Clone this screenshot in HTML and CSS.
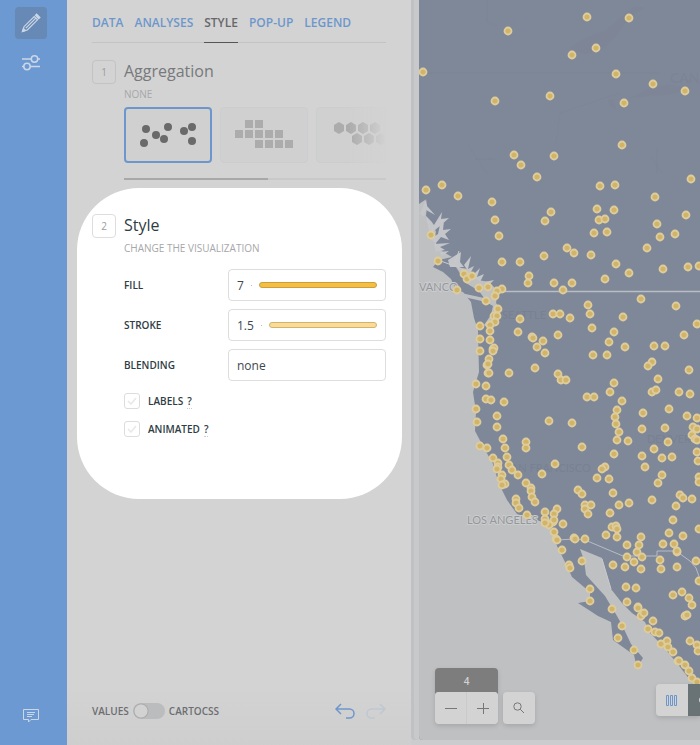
FILE: index.html
```html
<!DOCTYPE html>
<html lang="en">
<head>
<meta charset="utf-8">
<meta name="viewport" content="width=device-width, initial-scale=1">
<title>Map editor</title>
<link rel="stylesheet" href="styles.css">
</head>
<body>
<div class="app">
  <aside class="rail">
    <button class="rail-btn rail-btn-active" type="button" aria-label="Edit">
      <svg width="20" height="20" viewBox="0 0 20 20" fill="none" stroke="currentColor" stroke-width="1.2"><path d="M1.600 18.400 3 13.700 13.200 3.500 16.500 6.800 6.300 17Z"/><path d="M4.800 15.200 14.800 5.200"/><path d="M1.400 18.600 2.400 15.500 4.500 17.600Z" fill="currentColor"/><path d="M14.400 2.300 15.600 1.100 18.900 4.400 17.700 5.600Z" fill="currentColor"/></svg>
    </button>
    <button class="rail-btn" type="button" aria-label="Settings">
      <svg width="20" height="18" viewBox="0 0 20 18" fill="none" stroke="currentColor" stroke-width="1.5"><path d="M1 5h9M17 5h2M1 12.500h2M9 12.500h10"/><circle cx="13.500" cy="5" r="3.200"/><circle cx="6" cy="12.500" r="3.200"/></svg>
    </button>
    <button class="rail-btn rail-last" type="button" aria-label="Comments">
      <svg width="16" height="14" viewBox="0 0 16 14" fill="none" stroke="currentColor" stroke-width="1"><path d="M.5.500h15v10H8L5.500 13v-2.500H.5zM4 3.500h8M4 5.500h7M4 7.500h5"/></svg>
    </button>
  </aside>

  <main class="panel">
    <nav class="tabs">
      <a class="tab" href="#data">DATA</a>
      <a class="tab" href="#analyses">ANALYSES</a>
      <a class="tab tab-active" href="#style">STYLE</a>
      <a class="tab" href="#popup">POP-UP</a>
      <a class="tab" href="#legend">LEGEND</a>
    </nav>

    <section class="block">
      <span class="step">1</span>
      <div class="block-body">
        <h2 class="title">Aggregation</h2>
        <p class="sub">NONE</p>
        <div class="carousel">
          <button class="card card-active" type="button" aria-label="Points">
            <svg width="58" height="26" viewBox="0 0 58 26" fill="#6a6a6a"><circle cx="7" cy="7" r="4"/><circle cx="5" cy="21" r="4"/><circle cx="17" cy="13" r="4"/><circle cx="29" cy="5" r="4"/><circle cx="25" cy="17" r="4"/><circle cx="45" cy="9" r="4"/><circle cx="53" cy="5" r="4"/><circle cx="53" cy="19" r="4"/></svg>
          </button>
          <button class="card" type="button" aria-label="Squares">
            <svg width="58" height="30" viewBox="0 0 58 30"><path fill="#acacac" d="M10 0h8v8h-8zM20 0h8v8h-8zM0 10h8v8H0zM10 10h8v8h-8zM20 10h8v8h-8zM30 10h8v8h-8zM40 10h8v8h-8zM20 20h8v8h-8zM30 20h8v8h-8zM40 20h8v8h-8zM50 20h8v8h-8z"/></svg>
          </button>
          <button class="card" type="button" aria-label="Hexagons">
            <svg width="52" height="26" viewBox="0 0 52 26"><defs><path id="hex" fill="#acacac" d="M5 0 10 3v6l-5 3-5-3V3z"/></defs><use href="#hex"/><use href="#hex" x="12"/><use href="#hex" x="24"/><use href="#hex" x="36"/><use href="#hex" x="18" y="11"/><use href="#hex" x="30" y="11"/><use href="#hex" x="42" y="11"/></svg>
          </button>
        </div>
        <div class="track"><div class="thumb"></div></div>
      </div>
    </section>

    <section class="block spotlight">
      <span class="step">2</span>
      <div class="block-body">
        <h2 class="title">Style</h2>
        <p class="sub">CHANGE THE VISUALIZATION</p>
        <div class="form">
          <div class="row">
            <label class="label" for="fill">FILL</label>
            <button class="field" id="fill" type="button"><span>7</span><span class="dot"></span><span class="bar"></span></button>
          </div>
          <div class="row">
            <label class="label" for="stroke">STROKE</label>
            <button class="field" id="stroke" type="button"><span>1.5</span><span class="dot"></span><span class="bar bar-light"></span></button>
          </div>
          <div class="row">
            <label class="label" for="blending">BLENDING</label>
            <select class="field" id="blending"><option>none</option></select>
          </div>
          <div class="check-row">
            <span class="check"><input type="checkbox" id="labels"><svg width="10" height="8" viewBox="0 0 10 8"><path d="M1 4l3 3 5-6"/></svg></span>
            <label class="label" for="labels">LABELS</label><span class="help">?</span>
          </div>
          <div class="check-row">
            <span class="check"><input type="checkbox" id="animated"><svg width="10" height="8" viewBox="0 0 10 8"><path d="M1 4l3 3 5-6"/></svg></span>
            <label class="label" for="animated">ANIMATED</label><span class="help">?</span>
          </div>
        </div>
      </div>
    </section>

    <footer class="foot">
      <label for="mode">VALUES</label>
      <input class="switch" type="checkbox" id="mode">
      <label for="mode">CARTOCSS</label>
      <div class="history">
        <button class="icon-btn undo" type="button" aria-label="Undo"><svg width="20" height="16" viewBox="0 0 20 16"><path d="M6 1 1 6l5 5M1 6h13.500a4.500 4.500 0 0 1 0 9H11"/></svg></button>
        <button class="icon-btn redo" type="button" aria-label="Redo"><svg width="20" height="16" viewBox="0 0 20 16"><path d="M14 1l5 5-5 5M19 6H5.500a4.500 4.500 0 0 0 0 9H9"/></svg></button>
      </div>
    </footer>
  </main>

  <section class="map">
    <svg class="map-art" viewBox="419 0 281 740" preserveAspectRatio="xMinYMin slice" role="img" aria-label="Map of western North America">
      <defs>
        <marker id="pin" markerWidth="10" markerHeight="10" refX="5" refY="5" markerUnits="userSpaceOnUse"><circle cx="5" cy="5" r="3.500" fill="#d0b467" stroke="#dfcc9c" stroke-width="1.800"/></marker>
      </defs>
      <rect x="419" width="2000" height="2000" fill="#7f8899"/>
      <g fill="#7b8191" stroke="#7b8191">
        <path d="M570 48l15-10 20-7 17-14 12-10 10 1-14 8-14 20-12 12-18 6zM630 98l20-10 20-3 20 4-20 5-18 1zM608 100l6 0 2 10-6-4z" opacity=".35"/>
        <path fill="none" opacity=".4" d="M468 145l20 30M475 159h20M556 143l4-30 60-20M650 155l12 18M657 148v25M487 0v22l10 4M420 73h240"/>
      </g>
      <path fill="#bec0c2" d="M419 204 425 200 427 206 426 216 432 222 436 232 434 240 440 250 452 257 439 260 433 267 443 272 451 279 456 290 463 292 471 302 474 318 478 330 479 372 473 392 476 412 475 431 484 448 493 464 499 484 507 500 517 514 532 519 547 523 552 532 557 546 565 562 572 577 590 592 590 601 578 603 598 616 611 622 613 640 634 655 636 664 640 663 643 658 631 644 622 625 617 616 605 596 586 575 584 560 580 549 602 558 611 589 622 603 632 613 645 622 650 633 660 643 667 651 680 667 690 680 704 690 740 740 1000 2000H419Z"/>
      <path fill="#bec0c2" d="M456 267 468 269 478 280 489 282 498 291 496 303 500 308 494 322 488 328 484 325 491 315 493 306 486 302 464 297 461 293 484 298 479 291 466 283Z"/>
      <g fill="#c4c6ca">
        <path d="M420 214 426 199 427 206 435 215 426 210 424 217ZM426 216 434 225 442 212 441 219 449 218 440 226 430 234ZM430 239 438 234 440 225 444 221 443 230 451 229 445 234 449 240 441 237 436 243ZM434 244 450 243 440 247 445 250 436 252ZM440 252 449 251 442 256ZM448 260 461 252 460 262 464 267 450 267ZM464 265 471 256 468 269 474 266 470 274ZM472 276 480 268 477 277 484 274 480 282ZM484 282 494 280 489 285Z"/>
      </g>
      <path fill="none" stroke="#c9cacd" stroke-width="1" d="M427 218l3 11M432 228l4 18M455 262l4-11M438 260l22 8 14 8M602 559l9 30"/>
      <path fill="none" stroke="#b9bdc4" stroke-width="1.500" d="M503 291.500H2000"/>
      <path fill="none" stroke="#b6bcc8" stroke-width="1" d="M557 540l18-1 10 1 38 16h34v-5h19l14 10 6 7 5 14 10 15"/>
      <g class="place-faint"><text x="670" y="83" class="country">CANADA</text><text x="502" y="319">SEATTLE</text><text x="505" y="472">SAN FRANCISCO</text><text x="647" y="443">DENVER</text></g>
      <g class="place"><text x="419" y="291">VANCO</text><text x="467" y="524">LOS ANGELES</text></g>
      <polyline fill="none" stroke="none" marker-start="url(#pin)" marker-mid="url(#pin)" marker-end="url(#pin)" points="587,17 629,18 508,31 596,48 572,55 423,72 616,74 653,84 685,91 495,101 550,96 624,103 622,145 514,155 521,165 554,156 537,177 426,190 442,185 458,196 600,186 615,185 691,179 655,197 492,202 551,212 545,221 495,220 499,236 502,262 520,262 544,256 567,248 574,253 431,235 438,261 529,276 528,283 554,283 572,283 563,290 464,274 467,279 472,276 479,288 488,287 502,289 497,291 495,296 486,301 457,290 498,309 494,316 497,316 495,322 490,325 490,331 480,326 520,319 518,332 553,314 560,314 570,318 558,335 532,337 533,338 543,341 537,347 545,353 480,339 490,340 480,351 493,349 494,348 489,359
        597,209 614,210 599,220 605,219 686,215 657,224 594,233 607,232 660,237 675,234 647,248 591,255 616,264 629,273 605,279 663,269 688,267 699,266 641,299 588,305 590,314 676,306 623,317 592,328 614,332 609,342 625,347 697,324 684,335 654,346 665,346 593,355 607,355 652,362 648,366 689,370 558,374 658,379
        493,351 487,365 488,364 488,373 489,373 509,373 535,368 561,380 566,380 476,384 486,386 486,399 491,400 504,402 476,409 497,416 497,427 477,422 549,421 572,423 587,397 594,397 614,383 610,392 622,401 617,410 615,417 616,424 619,432 617,440 628,441 614,454 652,392 656,390 679,392 690,394 669,409 643,413 642,429 665,428 687,416 697,418 693,427 697,429 692,435 695,439 697,440 697,452 698,461 668,442 654,449 642,456 662,458 672,457 645,467 662,475 658,483 699,477 699,482
        503,439 505,448 507,457 480,446 487,448 526,442 526,448 582,447 555,464 542,474 493,458 498,463 498,467 497,469 502,475 501,479 505,484 502,485 509,465 512,470 518,475 526,483 531,488 531,491 532,497 535,502 516,499 516,503 519,508 527,515 605,467 602,469 597,478 609,479 613,493 578,490 582,494 585,505 591,505 585,509 588,514 619,505 629,503 610,513 652,500 680,495 683,498 692,499 676,506 673,520 545,512 545,519 557,509 554,514 553,522 554,520 549,525 545,523 563,524 554,532 556,539 557,540 562,550 574,538 575,539 585,539 606,535 612,527 616,526 617,529 617,537 641,537 627,545 639,545 669,533 683,536 663,544 674,544 699,529
        637,552 627,557 634,562 642,557 625,567 641,569 613,565 677,552 677,551 660,560 661,569 677,567 696,561 699,581 569,565 570,568 582,561 590,589 590,601 612,609 622,626 618,638 634,650 638,665 626,587 636,588 627,602 638,607 638,608 641,616 644,613 653,621 648,629 655,632 659,633 667,641 661,644 668,647 673,652 678,661 679,661 685,665 689,671 692,678 697,682 690,641 697,645 698,651 673,595 682,592 689,598 692,605 685,616 687,615"/>
    </svg>
    <div class="controls">
      <div class="zoom">
        <div class="zoom-level">4</div>
        <div class="zoom-btns">
          <button class="map-btn" type="button" aria-label="Zoom out"><svg width="12" height="12" viewBox="0 0 12 12"><path d="M0 6.500h12"/></svg></button>
          <button class="map-btn" type="button" aria-label="Zoom in"><svg width="12" height="12" viewBox="0 0 12 12"><path d="M0 6.500h12M6.500 1v11"/></svg></button>
        </div>
      </div>
      <button class="map-btn search" type="button" aria-label="Search"><svg width="12" height="12" viewBox="0 0 12 12"><circle cx="4.500" cy="4.500" r="3.700"/><path d="M7.300 7.300 11 11"/></svg></button>
    </div>
    <div class="views">
      <button class="map-btn view" type="button" aria-label="Table"><svg width="12" height="11" viewBox="0 0 12 11"><path d="M.5.500h2v10h-2zM4.500.500h2v10h-2zM8.500.500h2v10h-2z"/></svg></button>
      <button class="view-dark" type="button" aria-label="Map"><svg width="1" height="6" viewBox="0 0 1 6"><circle cx="3" cy="3" r="3" fill="#d3d3d3"/></svg></button>
    </div>
  </section>
</div>
</body>
</html>
```
FILE: styles.css
```css
* { box-sizing: border-box; }
body {
  margin: 0;
  background: #cbccce;
  color: #6c6e71;
  font-family: "Open Sans", "Noto Sans", sans-serif;
  font-size: 12px;
}
button, select, input { font: inherit; color: inherit; margin: 0; }
button { border: 0; padding: 0; background: none; }
svg { display: block; }

.app { display: flex; min-height: 100vh; }

.rail {
  flex: 0 0 67px;
  display: flex;
  flex-direction: column;
  align-items: center;
  gap: 8px;
  padding: 7px 5px 13px 0;
  background: #6c99d2;
}
.rail-btn {
  display: grid;
  place-items: center;
  width: 32px;
  height: 32px;
  border-radius: 4px;
  color: #cbd7e6;
}
.rail-btn-active { background: #6689b5; }
.rail-last { margin-top: auto; }

.panel {
  flex: 0 0 344px;
  min-width: 0;
  display: flex;
  flex-direction: column;
  padding: 0 25px;
  background: linear-gradient(#d3d3d3 92%, #cecece);
}
.tabs {
  display: flex;
  gap: 11px;
  border-bottom: 1px solid #c2c3c4;
}
.tab {
  height: 43px;
  margin-bottom: -1px;
  line-height: 45px;
  font-weight: 600;
  color: #6d97cc;
  text-decoration: none;
}
.tab-active { color: #66686b; border-bottom: 1px solid #555; }

.block { display: flex; gap: 8px; padding-top: 17px; }
.block-body { flex: 1; min-width: 0; }
.step {
  flex: none;
  width: 24px;
  height: 24px;
  border: 1px solid #c3c3c3;
  border-radius: 4px;
  font-size: 10px;
  line-height: 23px;
  text-align: center;
  color: #9b9c9e;
}
.title { margin: 0; font-size: 16px; font-weight: 400; line-height: 22px; color: #77797c; }
.sub { margin: 5px 0 6px; font-size: 10px; line-height: 14px; color: #a6a7a9; }

.carousel {
  display: flex;
  gap: 8px;
  overflow: hidden;
  mask-image: linear-gradient(90deg, #000 86%, transparent);
}
.card {
  flex: 0 0 88px;
  height: 56px;
  display: grid;
  place-items: center;
  border: 1px solid #cccdce;
  border-radius: 4px;
  background: #d0d0d0;
}
.card-active { border: 2px solid #6d97cc; }
.track { height: 2px; margin: 15px 0 8px; background: #c9c9c9; }
.thumb { width: 55%; height: 2px; background: #a8a8a8; }

.spotlight {
  margin: 0 -16px 0 -15px;
  padding: 26px 16px 62px 15px;
  border-radius: 62px;
  background: #fff;
}
.spotlight .step { border-color: #ddd; }
.spotlight .title { color: #2e3c43; }
.form { display: flex; flex-direction: column; gap: 8px; padding-top: 8px; color: #2e3c43; }
.row { display: flex; justify-content: space-between; align-items: center; }
.label { font-size: 10px; font-weight: 600; }
.field {
  display: flex;
  align-items: center;
  width: 158px;
  height: 32px;
  padding: 0 8px;
  border: 1px solid #ddd;
  border-radius: 4px;
  background: #fff;
  appearance: none;
  color: #3c484f;
}
.dot { width: 1px; height: 1px; margin: 0 7px; background: #bbb; }
.bar { flex: 1; height: 6px; border: 1px solid #c9a03e; border-radius: 3px; background: #f6bf44; }
.bar-light { border-color: #d2b36c; background: #fbdb98; }
.check-row { display: flex; align-items: center; padding: 4px 0 0; height: 20px; }
.check { display: grid; place-items: center; margin-right: 8px; }
.check input, .check svg { grid-area: 1 / 1; }
.check svg { pointer-events: none; }
.check input { width: 16px; height: 16px; border: 1px solid #ddd; border-radius: 3px; appearance: none; }
.check path { fill: none; stroke: #e8e8e8; stroke-width: 1.500; }
.help { margin-left: 4px; border-bottom: 1px dotted #ccc; font-size: 10px; font-weight: 600; line-height: 14px; }

.foot {
  display: flex;
  align-items: center;
  gap: 4px;
  margin-top: auto;
  padding-bottom: 24px;
  font-size: 10px;
  font-weight: 600;
  line-height: 20px;
}
.switch {
  width: 32px;
  height: 16px;
  border-radius: 8px;
  appearance: none;
  background: radial-gradient(circle at 8px 8px, #d2d2d2 6px, #a9aaab 7px, #bbbcbe 8px);
}
.history { display: flex; gap: 11px; margin-left: auto; }
.icon-btn path { fill: none; stroke: currentColor; stroke-width: 1.500; }
.undo { color: #6d97cc; }
.redo { color: #bec7d2; }

.map {
  position: relative;
  flex: 1;
  min-width: 0;
  margin: 0 0 5px 8px;
  overflow: hidden;
  border-radius: 0 0 0 4px;
  background: #bec0c2;
  box-shadow: -5px 0 0 #c7c9cb, -8px 0 0 #bfc1c3;
}
.map-art { position: absolute; width: 100%; height: 100%; }
.place { font: 11px Lato, sans-serif; fill: #94979a; stroke: #cbccce; stroke-width: 2px; paint-order: stroke; }
.place-faint { font: 11px Lato, sans-serif; fill: #788192; }
.country { font-size: 14px; fill: #7b8495; }

.controls { position: absolute; left: 16px; bottom: 16px; display: flex; align-items: flex-end; gap: 5px; }
.zoom { width: 63px; border-radius: 4px; background: #7d7d7d; box-shadow: 0 2px 5px #0002; }
.zoom-level { height: 24px; line-height: 26px; font-size: 10px; font-weight: 600; text-align: center; color: #d3d3d3; }
.zoom-btns { display: flex; overflow: hidden; border-radius: 4px; background: #d3d3d3; }
.map-btn { display: grid; place-items: center; flex: 1; height: 32px; background: #d3d3d3; }
.map-btn + .map-btn { border-left: 1px solid #cacaca; }
.map-btn path, .map-btn circle { fill: none; stroke: #777; stroke-width: 1; }
.search { flex: 0 0 32px; border-radius: 4px; box-shadow: 0 2px 5px #0002; }
.views { position: absolute; right: 0; bottom: 24px; display: flex; box-shadow: 0 2px 5px #0002; border-radius: 4px 0 0 4px; }
.view { flex: 0 0 32px; border-radius: 4px 0 0 4px; }
.map-btn.view path { stroke: #6d97cc; }
.view-dark { display: flex; justify-content: flex-end; align-items: center; width: 12px; height: 32px; background: #697376; }
```
